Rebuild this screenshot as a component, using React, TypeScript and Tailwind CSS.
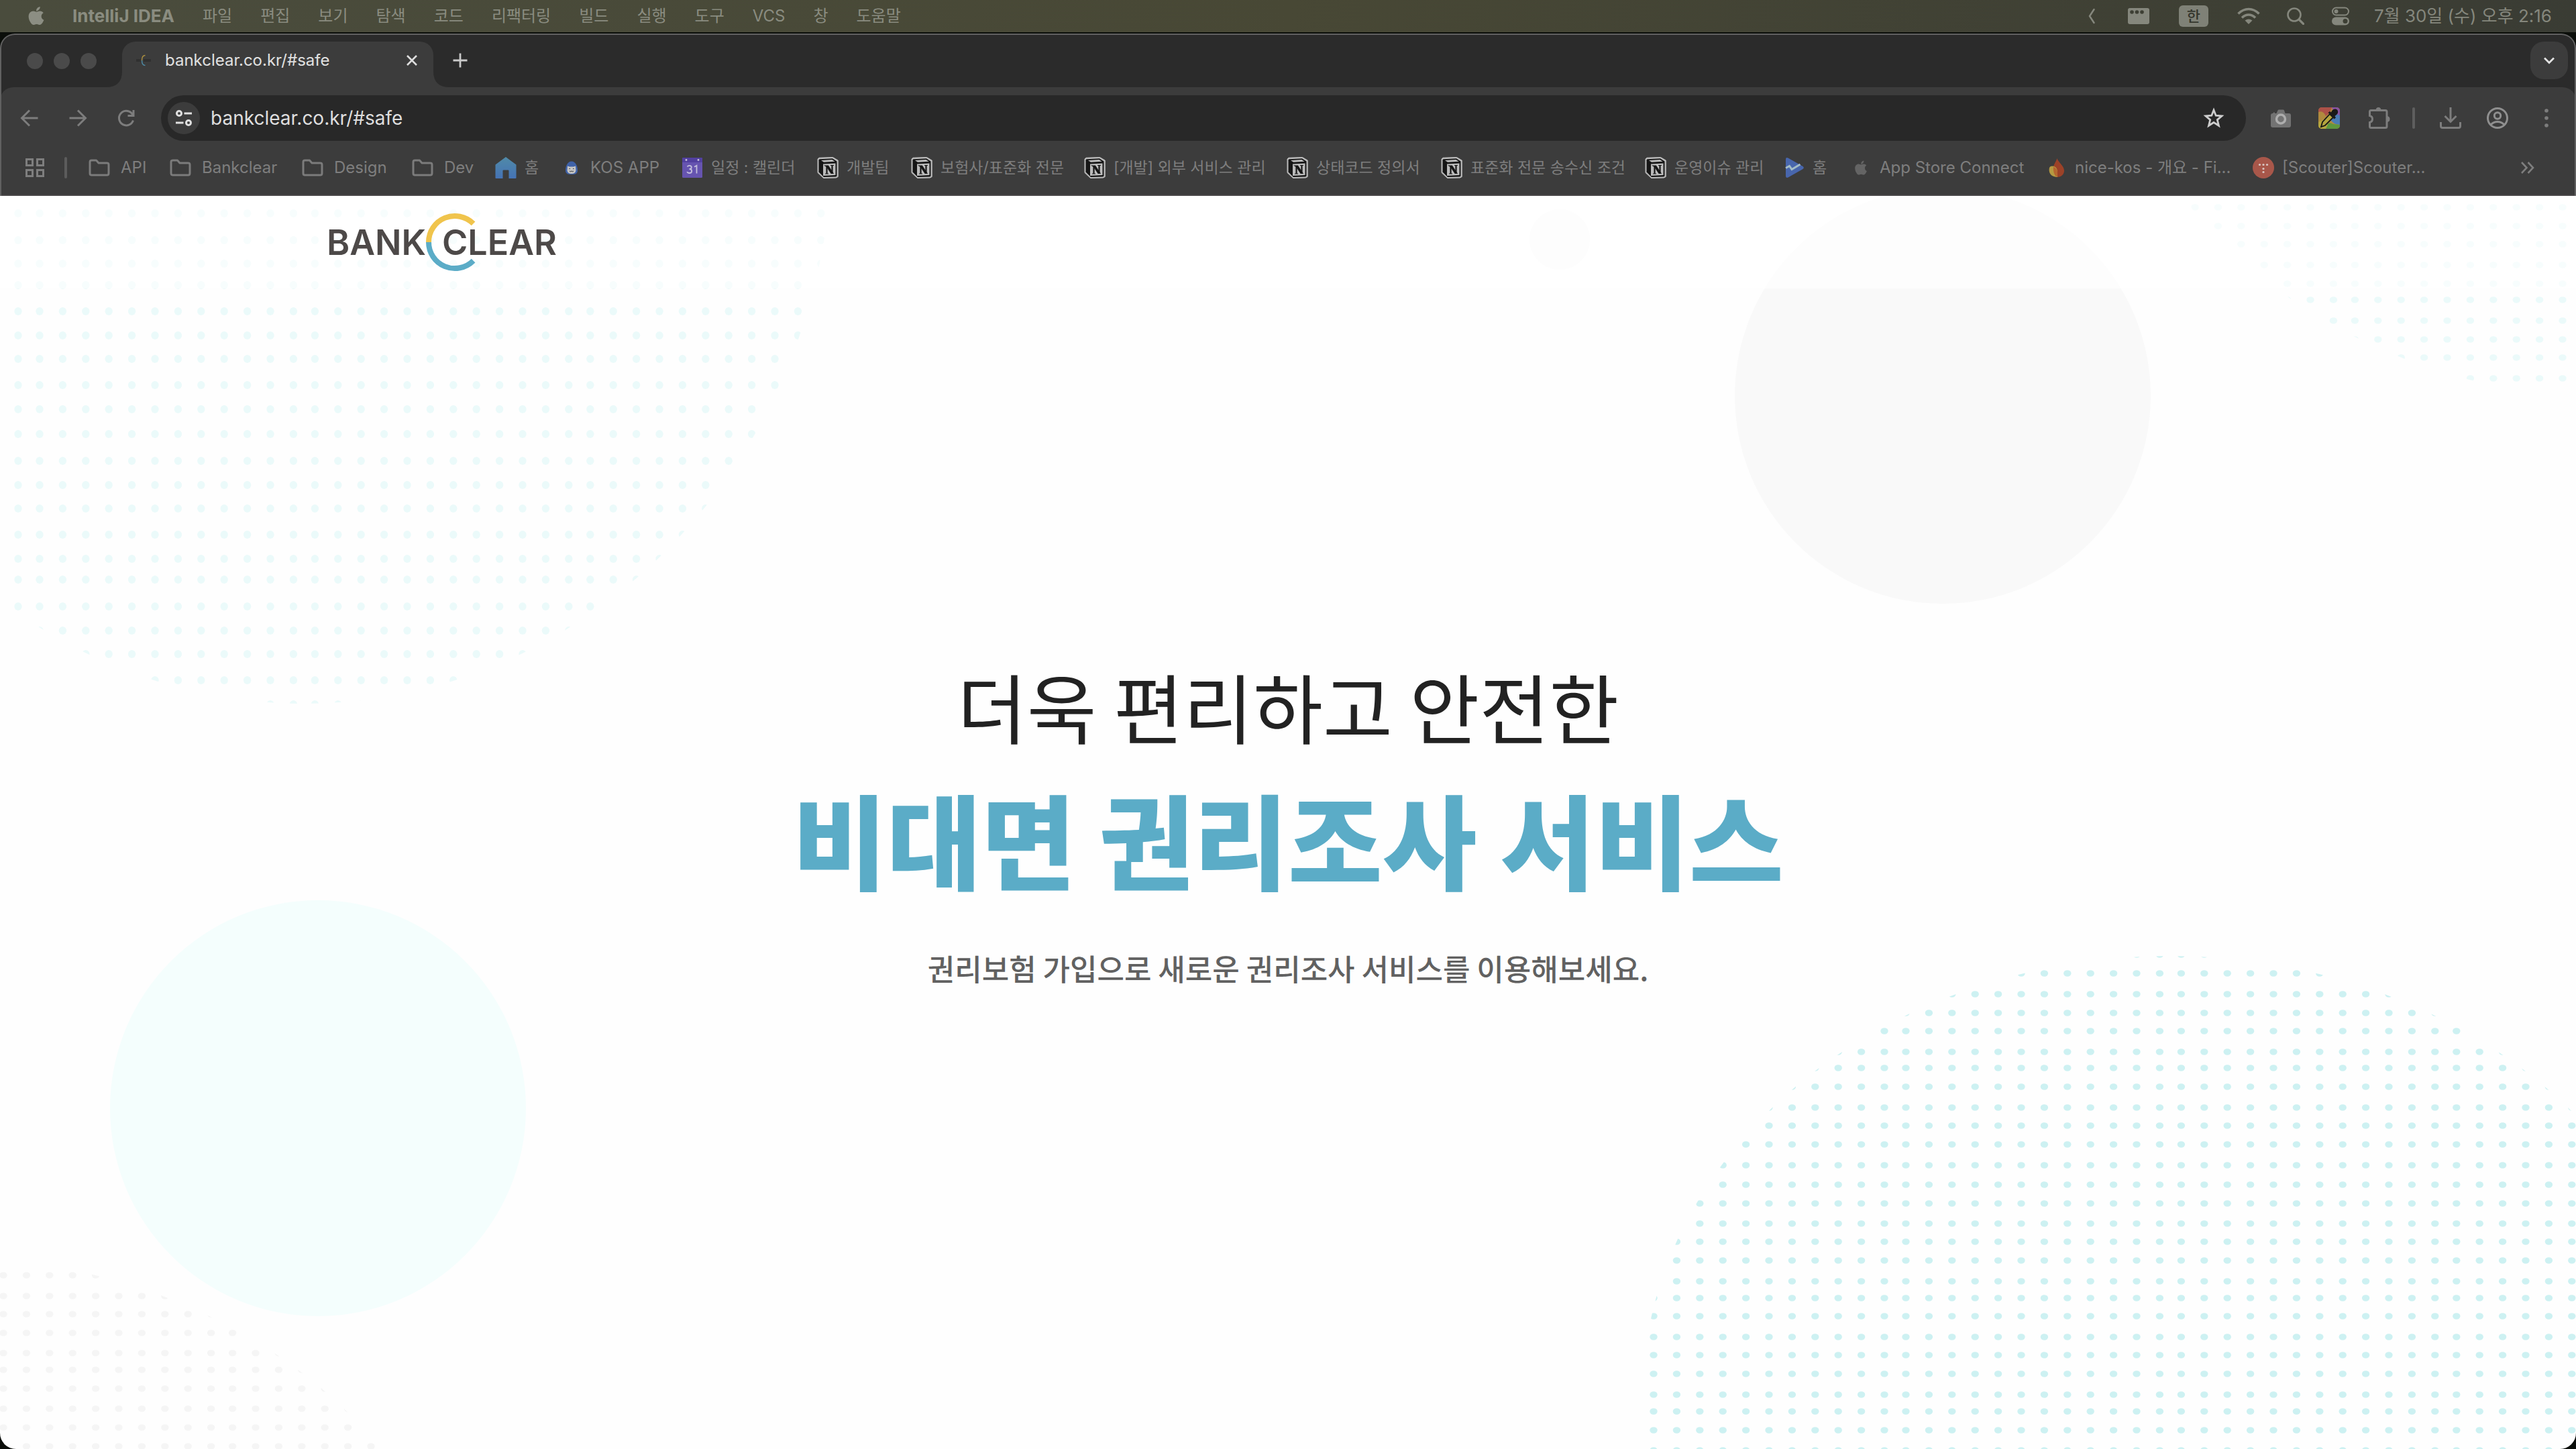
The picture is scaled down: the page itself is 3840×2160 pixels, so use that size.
import type { ReactNode } from "react";
import { FaApple } from "react-icons/fa";

const menus = ["파일", "편집", "보기", "탐색", "코드", "리팩터링", "빌드", "실행", "도구", "VCS", "창", "도움말"];

function Folder() {
  return (
    <svg viewBox="0 0 32 32" className="size-8" fill="none" stroke="#7b7b7b" strokeWidth="3" strokeLinejoin="round">
      <path d="M2 7.500Q2 5 4.500 5H11.500L15 9H27.500Q30 9 30 11.500V24.500Q30 27 27.500 27H4.500Q2 27 2 24.500Z" />
    </svg>
  );
}

function Home() {
  return (
    <svg viewBox="0 0 32 32" className="size-8">
      <defs>
        <linearGradient id="home" x1="0" y1="0" x2="0" y2="1">
          <stop offset="0" stopColor="#508aa8" />
          <stop offset="1" stopColor="#4573b5" />
        </linearGradient>
      </defs>
      <path d="M16 0L31.500 11.500V31Q31.500 32 30.500 32H20.500V20.500Q20.500 19.500 19.500 19.500H12.500Q11.500 19.500 11.500 20.500V32H1.500Q.5 32 .5 31V11.500Z" fill="url(#home)" />
    </svg>
  );
}

function Kos() {
  return (
    <svg viewBox="0 0 32 32" className="size-8">
      <path d="M16 6.500C22 6.500 25 14 25 20C25 25 21.500 26 16 26S7 25 7 20C7 14 10 6.500 16 6.500Z" fill="#3f62a8" />
      <path d="M10 13.500L13 14.500H19L22 13.500L22.500 20Q22 25 16 25T9.500 20Z" fill="#c4c4c4" />
      <path d="M12.500 17.500H14M18 17.500H19.500M13 21Q14.500 22.500 16 21Q17.500 22.500 19 21" stroke="#333" strokeWidth="1" fill="none" />
    </svg>
  );
}

function Calendar() {
  return (
    <svg viewBox="0 0 32 32" className="size-8">
      <rect x="1" y="1" width="30" height="30" rx="1.5" fill="#6654b0" />
      <path d="M1 2.500Q1 1 2.500 1H29.500Q31 1 31 2.500V8H1Z" fill="#5240a0" />
      <circle cx="7" cy="4.500" r="1.400" fill="#c9c4de" />
      <circle cx="25" cy="4.500" r="1.400" fill="#c9c4de" />
      <path d="M8.500 14.500Q9.500 12.800 11.800 12.800Q14.800 12.800 14.800 15.500Q14.800 18 11.500 18Q15.200 18 15.200 21Q15.200 24 11.800 24Q9 24 8.200 22M19 14.800L22.500 12.800V24.500" fill="none" stroke="#c4bfdc" strokeWidth="1.800" />
    </svg>
  );
}

function Notion() {
  return (
    <svg viewBox="0 0 32 32" className="size-8">
      <path d="M3 1.200L23.500 .5L31.200 5V29.500L28.500 31L9.500 31.500L1 23.500V3Z" fill="#bcbcbc" stroke="#bcbcbc" strokeLinejoin="round" />
      <path d="M3.500 3.200L23 2.200L29.500 6.500V28.500L28 29.500L10 30L2.500 22.500V4.500Z" fill="#161616" />
      <path d="M6 5L22.500 4L26.500 6.800L10 7.800Z" fill="#bcbcbc" />
      <path d="M9 10.500L27.500 9.500V27L9 28Z" fill="#bcbcbc" />
      <path d="M14.500 13V25M22.500 12.500V24.500" stroke="#161616" strokeWidth="2.200" />
      <path d="M12 13H16.500L24 24.500H21L14.500 14.500ZM12 25H17M20 12.500H25" fill="#161616" stroke="#161616" strokeWidth="1.200" />
    </svg>
  );
}

function Play() {
  return (
    <svg viewBox="0 0 32 32" className="size-8">
      <path d="M4 3.500Q4 0 7.500 1.500L29.500 14Q32 16 29.500 18L7.500 30.500Q4 32 4 28.500Z" fill="#4866ad" />
      <path d="M4 16.500L9.500 13.500L13 18.500L25.500 11" fill="none" stroke="#a3bcc6" strokeWidth="3" />
    </svg>
  );
}

function Flame() {
  return (
    <svg viewBox="0 0 32 32" className="size-8">
      <path d="M17.500 2C19 8 28 13 28 20.500C28 26 23.500 30 18 30S11 26 11 19C11 13 15 9 17.500 2Z" fill="#9c4228" />
      <path d="M6 16C8 11.500 18 13 18 22C18 26 17.500 28 18 30C10 30 4 25 6 16Z" fill="#b59a42" />
      <path d="M12 14.500Q18 17.500 18 23Q18 27 17 30Q11 25 12 14.500Z" fill="#b5662f" />
    </svg>
  );
}

function Scouter() {
  return (
    <svg viewBox="0 0 32 32" className="size-8">
      <circle cx="16" cy="16" r="16" fill="#a8574a" />
      <g fill="#d9c6c2">
        <circle cx="10.500" cy="11.500" r="1.600" />
        <circle cx="16" cy="11.500" r="1.600" />
        <circle cx="21.500" cy="11.500" r="1.600" />
        <circle cx="16" cy="17.500" r="1.600" />
        <circle cx="16" cy="22.500" r="1.600" />
      </g>
    </svg>
  );
}

const bookmarks: { icon: ReactNode; label: string; box: string; latin?: boolean }[] = [
  { icon: <Folder />, label: "API", box: "w-[121px] gap-4", latin: true },
  { icon: <Folder />, label: "Bankclear", box: "w-[197px] gap-4", latin: true },
  { icon: <Folder />, label: "Design", box: "w-[164px] gap-4", latin: true },
  { icon: <Folder />, label: "Dev", box: "w-[124px] gap-4", latin: true },
  { icon: <Home />, label: "홈", box: "w-[98px] gap-3" },
  { icon: <Kos />, label: "KOS APP", box: "w-[180px] gap-3", latin: true },
  { icon: <Calendar />, label: "일정 : 캘린더", box: "w-[202px] gap-3" },
  { icon: <Notion />, label: "개발팀", box: "w-[140px] gap-3" },
  { icon: <Notion />, label: "보험사/표준화 전문", box: "w-[258px] gap-3" },
  { icon: <Notion />, label: "[개발] 외부 서비스 관리", box: "w-[302px] gap-3" },
  { icon: <Notion />, label: "상태코드 정의서", box: "w-[230px] gap-3" },
  { icon: <Notion />, label: "표준화 전문 송수신 조건", box: "w-[304px] gap-3" },
  { icon: <Notion />, label: "운영이슈 관리", box: "w-[206px] gap-3" },
  { icon: <Play />, label: "홈", box: "w-[100px] gap-3" },
  { icon: <FaApple className="size-8 p-1 text-[#646464]" />, label: "App Store Connect", box: "w-[291px] gap-3", latin: true },
  { icon: <Flame />, label: "nice-kos - 개요 - Fi...", box: "w-[309px] gap-3", latin: true },
  { icon: <Scouter />, label: "[Scouter]Scouter...", box: "w-[280px] gap-3", latin: true },
];

function MenuBar() {
  return (
    <nav className="flex h-12 shrink-0 items-center justify-between bg-linear-to-r from-[#4a4c3d] via-[#484835] to-[#3a3c34] pr-9 pl-[38px] leading-8 text-[#8a8c80]">
      <div className="flex items-center gap-[42px] text-2xl">
        <button aria-label="Apple" className="mr-[-4px]">
          <FaApple className="size-8 pb-px text-[#8c8e83]" />
        </button>
        <button className="text-[26px] font-bold">IntelliJ IDEA</button>
        {menus.map((m) => (
          <button key={m}>{m}</button>
        ))}
      </div>
      <div className="flex items-center text-[#85877d]">
        <svg viewBox="0 0 10 24" className="mr-[49px] h-6 w-2.5" fill="none" stroke="currentColor" strokeWidth="2.500" strokeLinecap="round" strokeLinejoin="round">
          <path d="M8.500 2L2 12L8.500 22" />
        </svg>
        <svg viewBox="0 0 32 24" className="mr-11 h-6 w-8">
          <rect width="32" height="24" rx="3" fill="currentColor" />
          <circle cx="6" cy="6" r="2.800" fill="#3d3f34" />
          <circle cx="13.500" cy="6" r="2.800" fill="#3d3f34" />
          <circle cx="21" cy="6" r="2.800" fill="#3d3f34" />
        </svg>
        <span className="mr-[43px] rounded-md bg-[#7f8177] px-3 text-[22px] leading-8 font-medium text-[#34362d]">한</span>
        <svg viewBox="0 0 34 26" className="mr-10 h-[26px] w-[34px]" fill="none" stroke="currentColor" strokeWidth="3.600">
          <path d="M1.500 9.500Q8.500 2.500 17 2.500T32.500 9.500M7 15.500Q11.500 11 17 11T27 15.500" />
          <path d="M17 25L11.500 19.500Q17 15.500 22.500 19.500Z" fill="currentColor" stroke="none" />
        </svg>
        <svg viewBox="0 0 26 26" className="mr-10 size-[26px]" fill="none" stroke="currentColor" strokeWidth="2.600" strokeLinecap="round">
          <circle cx="11" cy="11" r="9.500" />
          <path d="M18 18L24.500 24.500" strokeWidth="3.200" />
        </svg>
        <svg viewBox="0 0 28 28" className="mr-9 size-7" fill="none" stroke="currentColor" strokeWidth="2">
          <rect x="2" y="1.500" width="24" height="11" rx="5.500" />
          <circle cx="7.500" cy="7" r="3" fill="currentColor" stroke="none" />
          <rect x="1" y="15.500" width="26" height="12" rx="6" fill="currentColor" stroke="none" />
          <circle cx="21" cy="21.500" r="3.500" fill="#3d3f34" stroke="none" />
        </svg>
        <time className="text-[26px]">7월 30일 (수) 오후 2:16</time>
      </div>
    </nav>
  );
}

function TabStrip() {
  return (
    <div className="flex h-20 shrink-0 items-end bg-[#2b2b2b] pr-2">
      <div className="flex gap-4 self-center pt-0.5 pr-[14px] pl-[40px]">
        <span className="size-6 rounded-full bg-[#4a4a4a]" />
        <span className="size-6 rounded-full bg-[#4a4a4a]" />
        <span className="size-6 rounded-full bg-[#4a4a4a]" />
      </div>
      <svg viewBox="0 0 24 24" className="size-6">
        <path d="M24 0V24H0Q24 24 24 0Z" fill="#3c3c3c" />
      </svg>
      <div className="flex h-[68px] w-[464px] items-center rounded-t-[20px] bg-[#3c3c3c] pr-5 pb-3 pl-5">
        <svg viewBox="0 0 24 24" className="mr-5 size-6" fill="none">
          <path d="M14.500 4.500Q9.500 4.500 9.500 12" stroke="#a88d3f" strokeWidth="1.500" />
          <path d="M9.500 12Q9.500 19.500 14.500 19.500" stroke="#4d87a0" strokeWidth="1.500" />
          <path d="M1 12H7.500M12 12H23" stroke="#303030" strokeWidth="4" />
        </svg>
        <span className="grow text-2xl leading-8 text-[#e0e0e0]">bankclear.co.kr/#safe</span>
        <button aria-label="탭 닫기">
          <svg viewBox="0 0 24 24" className="size-6" stroke="#dedede" strokeWidth="2.600">
            <path d="M5 5L19 19M19 5L5 19" />
          </svg>
        </button>
      </div>
      <svg viewBox="0 0 24 24" className="size-6">
        <path d="M0 0V24H24Q0 24 0 0Z" fill="#3c3c3c" />
      </svg>
      <button aria-label="새 탭" className="self-center">
        <svg viewBox="0 0 32 32" className="size-8" stroke="#cacaca" strokeWidth="2.800">
          <path d="M16 5.500V26.500M5.500 16H26.500" />
        </svg>
      </button>
      <button aria-label="탭 검색" className="mr-1 mb-3 ml-auto flex size-14 items-center justify-center rounded-[20px] bg-[#3c3c3c]">
        <svg viewBox="0 0 20 20" className="size-5" fill="none" stroke="#e2e2e2" strokeWidth="2.800">
          <path d="M3 6.500L10 13.500L17 6.500" />
        </svg>
      </button>
    </div>
  );
}

function Toolbar() {
  return (
    <div className="bg-[#2b2b2b]">
      <div className="flex h-[88px] items-center rounded-t-[20px] bg-[#3c3c3c] pt-1 pr-7 pl-7 text-[#7d7d7d]">
        <button aria-label="뒤로" className="mr-10">
          <svg viewBox="0 0 32 32" className="size-8" fill="none" stroke="currentColor" strokeWidth="3">
            <path d="M28.500 16H5M16 4.500L4.500 16L16 27.500" />
          </svg>
        </button>
        <button aria-label="앞으로" className="mr-10">
          <svg viewBox="0 0 32 32" className="size-8" fill="none" stroke="currentColor" strokeWidth="3">
            <path d="M3.500 16H27M16 4.500L27.500 16L16 27.500" />
          </svg>
        </button>
        <button aria-label="새로고침" className="mr-9">
          <svg viewBox="0 0 32 32" className="size-8" fill="none" stroke="currentColor" strokeWidth="3">
            <path d="M26.500 19.500A10.800 10.800 0 1 1 24 8.500L26.500 11.500M27 4V12.500H18.500" />
          </svg>
        </button>
        <div className="mr-9 flex h-[68px] min-w-0 grow items-center rounded-full bg-[#282828] pr-8 pl-2.5">
          <button aria-label="사이트 정보" className="mr-4 flex size-12 shrink-0 items-center justify-center rounded-full bg-[#3c3c3c]">
            <svg viewBox="0 0 28 28" className="size-7" fill="none" stroke="#e0e0e0" strokeWidth="3">
              <circle cx="7" cy="7" r="3.500" />
              <path d="M14.500 7H26M2 21H13.500" />
              <circle cx="21" cy="21" r="3.500" />
            </svg>
          </button>
          <input aria-label="주소창" defaultValue="bankclear.co.kr/#safe" className="h-9 min-w-0 grow bg-transparent text-[28px] leading-9 text-[#dedede] outline-none" />
          <button aria-label="북마크 추가">
            <svg viewBox="0 0 32 32" className="size-8" fill="none" stroke="#cdcdcd" strokeWidth="2.800">
              <path d="M16 4L19.200 12.200L28 12.900L21.300 18.600L23.500 27.300L16 22.500L8.500 27.300L10.700 18.600L4 12.900L12.800 12.200Z" />
            </svg>
          </button>
        </div>
        <button aria-label="캡처" className="mr-10">
          <svg viewBox="0 0 32 32" className="size-8">
            <path d="M1 12Q1 9 4 9L6 7L7.500 9H9.500L11.500 4.500Q12 3.500 13 3.500H19.500Q20.500 3.500 21 4.500L22.500 9H28Q31 9 31 12V27Q31 30 28 30H4Q1 30 1 27Z" fill="#737373" />
            <circle cx="16" cy="17.500" r="6.500" fill="none" stroke="#adadad" strokeWidth="3.500" />
          </svg>
        </button>
        <button aria-label="색상 추출" className="mr-10">
          <svg viewBox="0 0 32 32" className="size-8 rounded-[5px]">
            <rect width="32" height="32" fill="#b08a3e" />
            <path d="M0 0H20L17 8L11 13Q7 4 0 7Z" fill="#ad5148" />
            <path d="M20 0H32V13L24 10Z" fill="#8853a0" />
            <path d="M32 12V26Q21 25 18 18L26 10Z" fill="#4a7cb5" />
            <path d="M10 32Q13 20 22 25L32 26V32Z" fill="#5f983f" />
            <path d="M0 32V22L8 18L14 26L11 32Z" fill="#b5a53e" />
            <path d="M17 10L22 15L10 27L4 29L6 22Z" fill="#b5a53e" stroke="#161616" strokeWidth="1.800" />
            <path d="M14.500 8L17 6L19 7.500Q21 2 26 2.500Q30 4 29 8.500Q27 12 24.500 13L26 15.500L23.500 17.500Z" fill="#191919" />
          </svg>
        </button>
        <button aria-label="확장 프로그램" className="mr-5">
          <svg viewBox="0 0 36 36" className="size-9" fill="none" stroke="currentColor" strokeWidth="3">
            <path d="M4.500 8.500Q4.500 6.500 6.500 6.500H28Q30 6.500 30 8.500V30.500Q30 32.500 28 32.500H6.500Q4.500 32.500 4.500 30.500V24.500Q8.500 23.500 8.500 19.500T4.500 14.500Z" />
            <path d="M13.500 6Q14 2 17.500 2T21.500 6ZM30.500 15Q34.500 15.500 34.500 19.500T30.500 24Z" fill="currentColor" stroke="none" />
          </svg>
        </button>
        <span className="mr-9 ml-3 h-8 w-1 rounded-full bg-[#5e5e5e]" />
        <button aria-label="다운로드" className="mr-9">
          <svg viewBox="0 0 34 34" className="size-[34px]" fill="none" stroke="currentColor" strokeWidth="3">
            <path d="M17 1V22M8.500 14L17 22.500L25.500 14M2.500 23V29Q2.500 31.500 5 31.500H29Q31.500 31.500 31.500 29V23" />
          </svg>
        </button>
        <button aria-label="프로필" className="mr-10">
          <svg viewBox="0 0 34 34" className="size-[34px]" fill="none" stroke="#8f8f8f" strokeWidth="3">
            <circle cx="17" cy="17" r="14.500" />
            <circle cx="17" cy="13.500" r="4.700" />
            <path d="M7 27Q11 22.500 17 22.500T27 27" />
          </svg>
        </button>
        <button aria-label="메뉴">
          <svg viewBox="0 0 32 32" className="size-8" fill="currentColor">
            <circle cx="16" cy="5" r="2.800" />
            <circle cx="16" cy="16" r="2.800" />
            <circle cx="16" cy="27" r="2.800" />
          </svg>
        </button>
      </div>
    </div>
  );
}

function BookmarkBar() {
  return (
    <div className="flex h-[74px] shrink-0 items-center border-b-2 border-[#474546] bg-[#3c3c3c] pr-[60px] pb-2 pl-9 text-[#7e7e7e]">
      <button aria-label="앱">
        <svg viewBox="0 0 32 32" className="size-8" fill="none" stroke="currentColor" strokeWidth="3">
          <path d="M3.500 3.500H12.500V12.500H3.500ZM19.500 3.500H28.500V12.500H19.500ZM3.500 19.500H12.500V28.500H3.500ZM19.500 19.500H28.500V28.500H19.500Z" />
        </svg>
      </button>
      <span className="mx-7 h-8 w-1 rounded-full bg-[#5b5b5b]" />
      <div className="flex min-w-0 items-center pl-1">
        {bookmarks.map((b, i) => (
          <a key={i} href="#safe" className={`flex shrink-0 items-center whitespace-nowrap leading-8 ${b.box} ${b.latin ? "text-2xl" : "text-[23px]"}`}>
            <span className="shrink-0">{b.icon}</span>
            {b.label}
          </a>
        ))}
      </div>
      <button aria-label="북마크 더보기" className="ml-auto">
        <svg viewBox="0 0 24 24" className="size-6" fill="none" stroke="currentColor" strokeWidth="2.600">
          <path d="M3 4L10.500 12L3 20M12.500 4L20 12L12.500 20" />
        </svg>
      </button>
    </div>
  );
}

function columns(start: number, count: number, firstShort: number) {
  const xs = [start];
  for (let i = 1; i < count; i++) {
    xs.push(xs[i - 1] + ((i - firstShort) % 12 === 0 ? 32 : 34.4));
  }
  return xs;
}

function Dots({ id, xs, ys, ry, fill, clip }: { id: string; xs: number[]; ys: number[]; ry: number; fill: string; clip: [number, number, number, number] }) {
  return (
    <g fill={fill} clipPath={`url(#${id})`}>
      <clipPath id={id}>
        <ellipse cx={clip[0]} cy={clip[1]} rx={clip[2]} ry={clip[3]} />
      </clipPath>
      {ys.map((y) => xs.map((x) => <ellipse key={`${x}-${y}`} cx={x} cy={y} rx={5.700} ry={ry} />))}
    </g>
  );
}

const topLeftRows = [318, 358, 393, 425, 464, 500, 535, 574, 610, 647, 687, 723, 758, 797, 833, 864, 904, 940, 975, 1014, 1050];
const topRightRows = [309, 337, 364, 395, 423, 447, 478, 506, 533, 564];
const bottomRightRows = [1423, 1451, 1482, 1510, 1537, 1568, 1592, 1620, 1651, 1678, 1706, 1737, 1766, 1794, 1824, 1851, 1879, 1910, 1935, 1962, 1993, 2020, 2048, 2079, 2104, 2132, 2162];
const bottomLeftRows = [1901, 1932, 1959, 1987, 2017, 2042, 2070, 2100, 2128, 2156];

function Backdrop() {
  return (
    <svg viewBox="0 292 3840 1868" preserveAspectRatio="xMidYMid slice" className="absolute inset-0 size-full" aria-hidden="true">
      <Dots id="tl" xs={columns(27, 36, 1)} ys={topLeftRows} ry={5.900} fill="#ebfafa" clip={[454, 208, 787, 841]} />
      <Dots id="tr" xs={columns(3272, 17, 7)} ys={topRightRows} ry={4.800} fill="#ebfafa" clip={[3915, -64, 787, 660]} />
      <Dots id="br" xs={columns(2465, 41, 11)} ys={bottomRightRows} ry={4.850} fill="#cdf1f2" clip={[3235, 2085, 787, 660]} />
      <Dots id="bl" xs={columns(5, 17, 10)} ys={bottomLeftRows} ry={4.800} fill="#f5f5f5" clip={[-80, 2534, 787, 660]} />
      <circle cx="474" cy="1652" r="310" fill="#f4fefd" />
      <circle cx="2896" cy="590" r="310" fill="#f9f9f9" />
      <circle cx="2325" cy="357" r="45" fill="#f9f9f9" />
    </svg>
  );
}

function Logo() {
  return (
    <a href="/" aria-label="BANK CLEAR" className="block w-[356px]">
      <svg viewBox="0 0 356 96" className="h-24 w-[356px]">
        <g className="font-semibold" fill="#4d4948" fontSize="52">
          <text x="3" y="66">BANK</text>
          <text x="175" y="66">CLEAR</text>
        </g>
        <path d="M155 47A39 39 0 0 1 221.600 19.400" fill="none" stroke="#f0c44c" strokeWidth="8" />
        <path d="M155 47A39 39 0 0 0 221.600 74.600" fill="none" stroke="#5bacc7" strokeWidth="8" />
      </svg>
    </a>
  );
}

export default function App() {
  return (
    <div className="flex min-h-screen flex-col bg-[#0b0e0a] font-['Inter','Noto_Sans_CJK_KR',sans-serif]">
      <MenuBar />
      <div className="mt-0.5 flex grow flex-col overflow-hidden rounded-t-[22px] rounded-b-[24px] bg-[#2b2b2b]">
        <div className="relative">
          <TabStrip />
          <Toolbar />
          <BookmarkBar />
          <div className="pointer-events-none absolute inset-0 rounded-t-[22px] border-x-2 border-t-2 border-[#616161]" />
        </div>
        <main className="relative flex grow flex-col bg-[#fefefe]">
          <Backdrop />
          <div className="relative grid grow">
            <header className="col-start-1 row-start-1 h-[138px] self-start bg-white/60 pt-[22px] pl-[484px]">
              <Logo />
            </header>
            <section className="col-start-1 row-start-1 flex flex-col items-center self-center pb-1.5 text-center font-['Noto_Sans_CJK_KR',sans-serif]">
              <h1 className="flex flex-col">
                <span className="text-[113px] leading-[160px] text-[#222]">더욱 편리하고 안전한</span>
                <strong className="mt-2 text-[153px] leading-[220px] font-black text-[#5bacc7]">비대면 권리조사 서비스</strong>
              </h1>
              <p className="mt-[52px] text-[44px] leading-16 font-medium text-[#616161]">권리보험 가입으로 새로운 권리조사 서비스를 이용해보세요.</p>
            </section>
          </div>
        </main>
      </div>
    </div>
  );
}
